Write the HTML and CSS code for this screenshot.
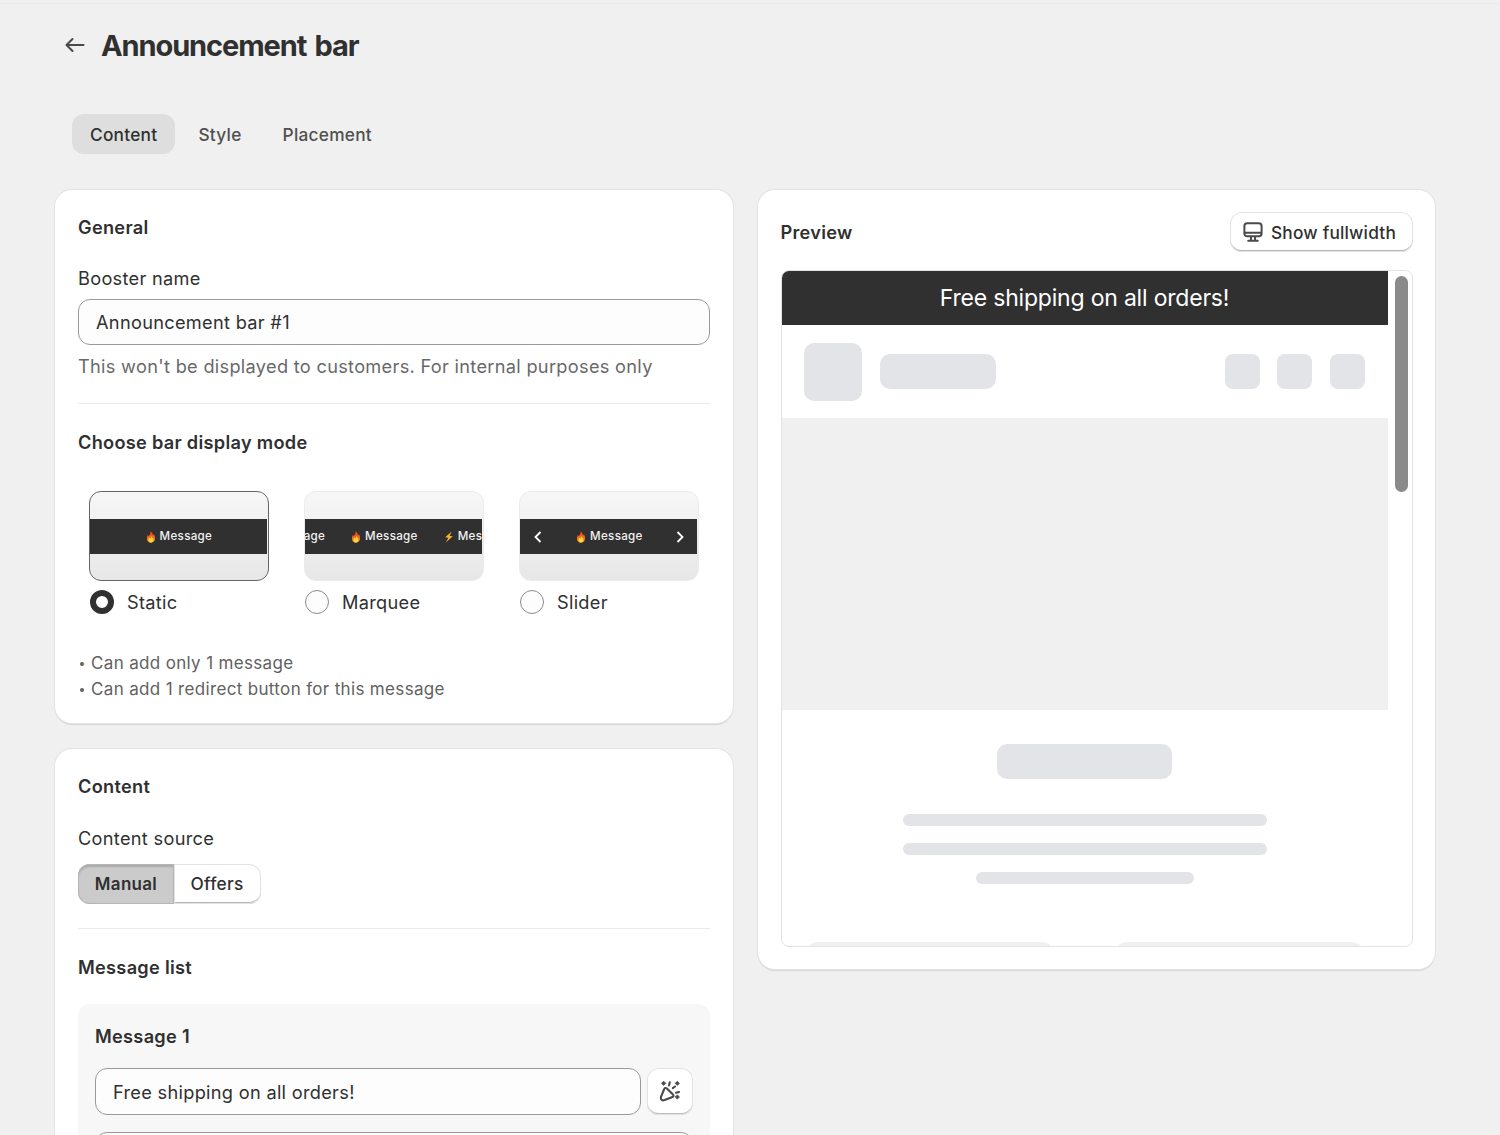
FILE: index.html
```
<!DOCTYPE html>
<html lang="en">
<head>
    <meta charset="UTF-8">
    <meta name="viewport" content="width=device-width, initial-scale=1.0">
    <title>Announcement bar</title>
    <link rel="stylesheet" href="styles.css">
</head>
<body>
    <!-- shared icons -->
    <svg class="sprite" width="0" height="0">
        <defs>
            <linearGradient id="flame" x1="0" y1="0" x2="0" y2="1">
                <stop offset="0" stop-color="#e8401c"/>
                <stop offset="1" stop-color="#ff8a1f"/>
            </linearGradient>
        </defs>
        <symbol id="fire" viewBox="0 0 10 12">
            <path d="M4.6 0.2C7 2 6.6 3.6 7 4.6C7.5 4.3 7.7 3.7 7.6 3C8.800 4.4 9.2 6 9.100 7.6C8.900 10.2 7.4 11.7 5 11.7C2.5 11.7 0.900 10.1 0.900 7.5C0.900 5.8 1.5 4.9 1.9 3.8C2.3 4.2 2.4 4.8 2.4 5.3C3.9 4 4.8 2.4 4.6 0.2Z" fill="url(#flame)"/>
            <path d="M5.3 4.8C5.6 6.6 7.6 7.2 7.5 9C7.4 10.5 6.4 11.4 5 11.4C3.6 11.4 2.5 10.5 2.5 9C2.5 7.8 3.2 7.5 3.5 6.6C4 7 4.1 7.3 4.2 7.7C5 7 5.4 6 5.3 4.8Z" fill="#ffd93b"/>
        </symbol>
        <symbol id="bolt" viewBox="0 0 10 12">
            <path d="M7.8 0.5L1.2 6.3L4.4 6.7L1.8 11.5L8.8 5.3L5.5 4.9Z" fill="#f9b52a"/>
        </symbol>
    </svg>

    <div class="page">
        <div class="page-header">
            <svg class="back" width="20" height="16" viewBox="0 0 20 16"><path d="M18.5 8H1.7M7.5 2L1.5 8L7.5 14"/></svg>
            <h1>Announcement bar</h1>
        </div>

        <div class="tabs">
            <button class="tab active" type="button">Content</button>
            <button class="tab" type="button">Style</button>
            <button class="tab" type="button">Placement</button>
        </div>

        <div class="columns">
            <div class="column">
                <div class="card">
                    <h2>General</h2>
                    <label class="label" for="booster-name">Booster name</label>
                    <input class="input" id="booster-name" type="text" value="Announcement bar #1">
                    <p class="help">This won't be displayed to customers. For internal purposes only</p>
                    <hr>
                    <h2>Choose bar display mode</h2>
                    <div class="modes">
                        <div class="mode">
                            <div class="thumb selected">
                                <div class="thumb-bar"><span class="message"><svg><use href="#fire"/></svg>Message</span></div>
                            </div>
                            <div class="radio-row"><span class="radio checked"></span><span>Static</span></div>
                        </div>
                        <div class="mode">
                            <div class="thumb">
                                <div class="thumb-bar marquee">
                                    <span class="message"><svg><use href="#bolt"/></svg>Message</span>
                                    <span class="message"><svg><use href="#fire"/></svg>Message</span>
                                    <span class="message"><svg><use href="#bolt"/></svg>Message</span>
                                </div>
                            </div>
                            <div class="radio-row"><span class="radio"></span><span>Marquee</span></div>
                        </div>
                        <div class="mode">
                            <div class="thumb">
                                <div class="thumb-bar slider">
                                    <svg class="chevron" viewBox="0 0 8 12"><path d="M6.5 1L1.5 6L6.5 11"/></svg>
                                    <span class="message"><svg><use href="#fire"/></svg>Message</span>
                                    <svg class="chevron" viewBox="0 0 8 12"><path d="M1.5 1L6.5 6L1.5 11"/></svg>
                                </div>
                            </div>
                            <div class="radio-row"><span class="radio"></span><span>Slider</span></div>
                        </div>
                    </div>
                    <div class="notes">
                        <p><i></i>Can add only 1 message</p>
                        <p><i></i>Can add 1 redirect button for this message</p>
                    </div>
                </div>

                <div class="card">
                    <h2>Content</h2>
                    <p class="label source-label">Content source</p>
                    <div class="segmented">
                        <button class="segment pressed" type="button">Manual</button>
                        <button class="segment" type="button">Offers</button>
                    </div>
                    <hr>
                    <h2>Message list</h2>
                    <div class="message-box">
                        <h2>Message 1</h2>
                        <div class="message-row">
                            <input class="input" type="text" value="Free shipping on all orders!">
                            <button class="icon-button" type="button">
                                <svg width="22" height="22" viewBox="0 0 22 22">
                                    <path class="line" d="M7.9 8.6L14 14.6C14.9 15.6 14.7 16.5 13.5 17L5.6 20.1C3.2 20.9 1.4 19.6 1.9 17.2L5 9.5C5.6 7.9 6.7 7.4 7.9 8.6ZM10 5.4L10.8 2.3M13.8 8.2L16 6.5M17 12.7L20 12"/>
                                    <path class="solid" d="M4.6 1.2L6.7 3.3L4.6 5.4L2.5 3.3ZM18.3 1.2L20.4 3.3L18.3 5.4L16.2 3.3ZM18.3 14.9L20.4 17L18.3 19.1L16.2 17Z"/>
                                </svg>
                            </button>
                        </div>
                        <input class="input" type="text">
                    </div>
                </div>
            </div>

            <div class="column">
                <div class="card preview-card">
                    <div class="preview-header">
                        <h2>Preview</h2>
                        <button class="button" type="button">
                            <svg width="20" height="20" viewBox="0 0 20 20"><path d="M4.2 1.2H15.8C17.4 1.2 18.6 2.4 18.6 4V11.5C18.6 13.1 17.4 14.3 15.8 14.3H4.2C2.6 14.3 1.4 13.1 1.4 11.5V4C1.4 2.4 2.6 1.2 4.2 1.2ZM1.5 10.8H18.5M8 14.5V18.5M12 14.5V18.5M5.2 18.8H14.8"/></svg>
                            Show fullwidth
                        </button>
                    </div>
                    <div class="preview">
                        <div class="preview-page">
                            <div class="banner">Free shipping on all orders!</div>
                            <div class="store-header">
                                <span class="bone logo"></span>
                                <span class="bone name"></span>
                                <span class="bone action"></span>
                                <span class="bone action"></span>
                                <span class="bone action"></span>
                            </div>
                            <div class="hero"></div>
                            <div class="store-text">
                                <span class="bone title"></span>
                                <span class="bone text"></span>
                                <span class="bone text"></span>
                                <span class="bone text short"></span>
                            </div>
                            <div class="products">
                                <span></span>
                                <span></span>
                            </div>
                        </div>
                        <div class="scrollbar"><span></span></div>
                    </div>
                </div>
            </div>
        </div>
    </div>
</body>
</html>
```

FILE: styles.css
```
* { box-sizing: border-box; }
html { overflow: hidden; }
body {
    margin: 0;
    height: 1135px;
    overflow: hidden;
    background: #f0f0f0;
    color: #303030;
    font-family: Inter, "Liberation Sans", sans-serif;
    font-size: 18.2px;
    line-height: 29px;
    letter-spacing: 0.3px;
}
h1, h2, p { margin: 0; }
button, input { font: inherit; color: inherit; letter-spacing: inherit; }
svg { flex: none; }
.sprite { position: absolute; }

.page { border-top: 1px solid #e9e9e9; margin-top: 3px; padding: 24px 65px 0 55px; }
.page-header { display: flex; align-items: center; gap: 16px; height: 36px; padding-left: 10px; }
.page-header h1 { font-size: 29px; font-weight: 700; line-height: 36px; letter-spacing: -1.1px; word-spacing: 2.5px; }
.back { margin-top: -2px; fill: none; stroke: #4a4a4a; stroke-width: 2.1; stroke-linecap: round; stroke-linejoin: round; }

.tabs { display: flex; gap: 5px; margin: 50px 0 0 17px; }
.tab { height: 40px; padding: 0 18px; border: 0; border-radius: 12px; background: none; color: #505050; font-size: 17.3px; font-weight: 500; letter-spacing: 0.25px; }
.tab.active { background: #dedede; color: #303030; }

.columns { display: flex; align-items: flex-start; gap: 25px; margin-top: 36px; }
.column { flex: 1; min-width: 0; display: flex; flex-direction: column; gap: 26px; }
.card {
    padding: 23px 23px 21px;
    border-radius: 17px;
    background: #fff;
    box-shadow: 0 0 0 1px #e3e3e3, 0 2px 1px #d6d6d6;
}
h2 { font-size: 18.2px; font-weight: 600; line-height: 29px; letter-spacing: 0.28px; }
.label { display: block; margin-top: 22px; }
.input {
    display: block;
    width: 100%;
    height: 46px;
    margin-top: 6px;
    padding: 0 17px;
    border: 1px solid #9a9a9a;
    border-radius: 12px;
    background: #fdfdfd;
    outline: 0;
}
.help { margin-top: 7px; color: #696969; }
hr { height: 1px; margin: 22px 0 24px; border: 0; background: #ebebeb; }

.modes { display: flex; gap: 35px; margin: 34px 0 0 11.400px; }
.mode { flex: none; width: 180px; }
.thumb {
    display: flex;
    align-items: center;
    height: 90px;
    padding: 0 1px 0 0;
    border: 1px solid #ebebeb;
    border-radius: 12px;
    background: linear-gradient(#f7f7f7, #e7e7e7);
}
.thumb.selected { border-color: #666; }
.thumb-bar {
    display: flex;
    align-items: center;
    justify-content: center;
    width: 100%;
    height: 35px;
    padding-top: 1px;
    overflow: hidden;
    background: #303030;
    color: #f2f2f2;
}
.thumb-bar.marquee { gap: 26px; padding-right: 19px; }
.thumb-bar.slider { justify-content: space-between; padding: 1px 13px 0 14px; }
.message { display: flex; flex: none; align-items: center; gap: 4px; font-size: 11.6px; font-weight: 500; }
.message svg { width: 10px; height: 12px; }
.chevron { width: 8px; height: 12px; fill: none; stroke: #fff; stroke-width: 1.8; }
.radio-row { display: flex; align-items: center; gap: 13px; height: 24px; margin-top: 9px; padding-left: 0.6px; }
.radio { width: 24px; height: 24px; border: 1px solid #8a8a8a; border-radius: 50%; background: #fdfdfd; }
.radio.checked { border: 6px solid #303030; background: #fff; }
.notes { margin-top: 36px; color: #616161; font-size: 17px; line-height: 26px; letter-spacing: 0.34px; }
.notes p { display: flex; align-items: center; }
.notes i { width: 4px; height: 4px; margin: 1px 7px 0 2px; border-radius: 50%; background: #616161; }

.source-label { margin-top: 23px; }
.segmented { display: flex; width: 183px; margin-top: 11px; }
.segment {
    flex: 1;
    height: 40px;
    padding: 0 1px 1px 0;
    border: 0;
    border-radius: 0 12px 12px 0;
    background: #fff;
    box-shadow: inset 0 0 0 1px #e3e3e3, inset 0 -2px 0 #b8b8b8;
    font-size: 17.3px;
    font-weight: 500;
}
.segment.pressed {
    flex: none;
    width: 96px;
    padding: 0;
    border-radius: 12px 0 0 12px;
    background: #cbcbcb;
    box-shadow: inset 0 0 0 1px #b5b5b5, inset 0 3px 2px #aaa;
    font-size: 17px;
    font-weight: 600;
}
.segmented + hr { margin-top: 24px; }

.message-box { height: 300px; margin-top: 22px; padding: 18px 17px; border-radius: 12px; background: #f7f7f7; }
.message-row { display: flex; gap: 6px; margin: 17px 0; }
.message-row .input { flex: 1; height: 47px; margin: 0; }
.message-box > .input { margin: 0; }
.icon-button {
    display: flex;
    align-items: center;
    justify-content: center;
    width: 46px;
    height: 47px;
    padding: 0 0 2px;
    border: 0;
    border-radius: 12px;
    background: #fff;
    box-shadow: inset 0 0 0 1px #e3e3e3, inset 0 -2px 0 #bdbdbd;
}
.icon-button .line { fill: none; stroke: #4a4a4a; stroke-width: 2.1; stroke-linecap: round; stroke-linejoin: round; }
.icon-button .solid { fill: #4a4a4a; stroke: #4a4a4a; stroke-width: 0.8; stroke-linejoin: round; }

.preview-card { padding: 22px 22px 22px 23px; }
.preview-header { display: flex; align-items: center; justify-content: space-between; height: 40px; }
.button {
    display: flex;
    align-items: center;
    justify-content: center;
    gap: 8px;
    width: 183px;
    height: 40px;
    padding: 0 4px 0 0;
    border: 0;
    border-radius: 12px;
    background: #fff;
    box-shadow: inset 0 0 0 1px #e3e3e3, inset 0 -2px 0 #b8b8b8;
    font-size: 17.3px;
    font-weight: 500;
    letter-spacing: 0.2px;
}
.button svg { fill: none; stroke: #4a4a4a; stroke-width: 2; stroke-linecap: round; }
.preview { display: flex; height: 677px; margin-top: 18px; overflow: hidden; border: 1px solid #e3e3e3; border-radius: 8px; }
.preview-page { flex: none; width: 606px; }
.banner { height: 54px; background: #303030; color: #fff; font-size: 23px; line-height: 54px; text-align: center; letter-spacing: -0.2px; }
.bone { flex: none; border-radius: 10px; background: #e3e4e8; }
.store-header { display: flex; align-items: center; gap: 18px; height: 93px; padding: 0 23px 0 22px; }
.logo { width: 58px; height: 58px; }
.name { width: 116px; height: 35px; margin-right: auto; }
.action { width: 35px; height: 35px; border-radius: 8px; }
.action + .action { margin-left: -0.5px; }
.hero { height: 292px; background: #f0f0f0; }
.store-text { display: flex; flex-direction: column; align-items: center; gap: 17px; padding-top: 34px; }
.title { width: 175px; height: 35px; margin-bottom: 18px; }
.text { width: 364px; height: 12px; border-radius: 6px; }
.text.short { width: 218px; }
.products { display: flex; gap: 61px; padding: 58px 24px 0; }
.products span { flex: 1; height: 250px; border-radius: 12px; background: #f0f0f0; }
.scrollbar { flex: 1; padding: 5px 0 0 7px; }
.scrollbar span { display: block; width: 13px; height: 216px; border-radius: 7px; background: #8a8a8a; }
```
